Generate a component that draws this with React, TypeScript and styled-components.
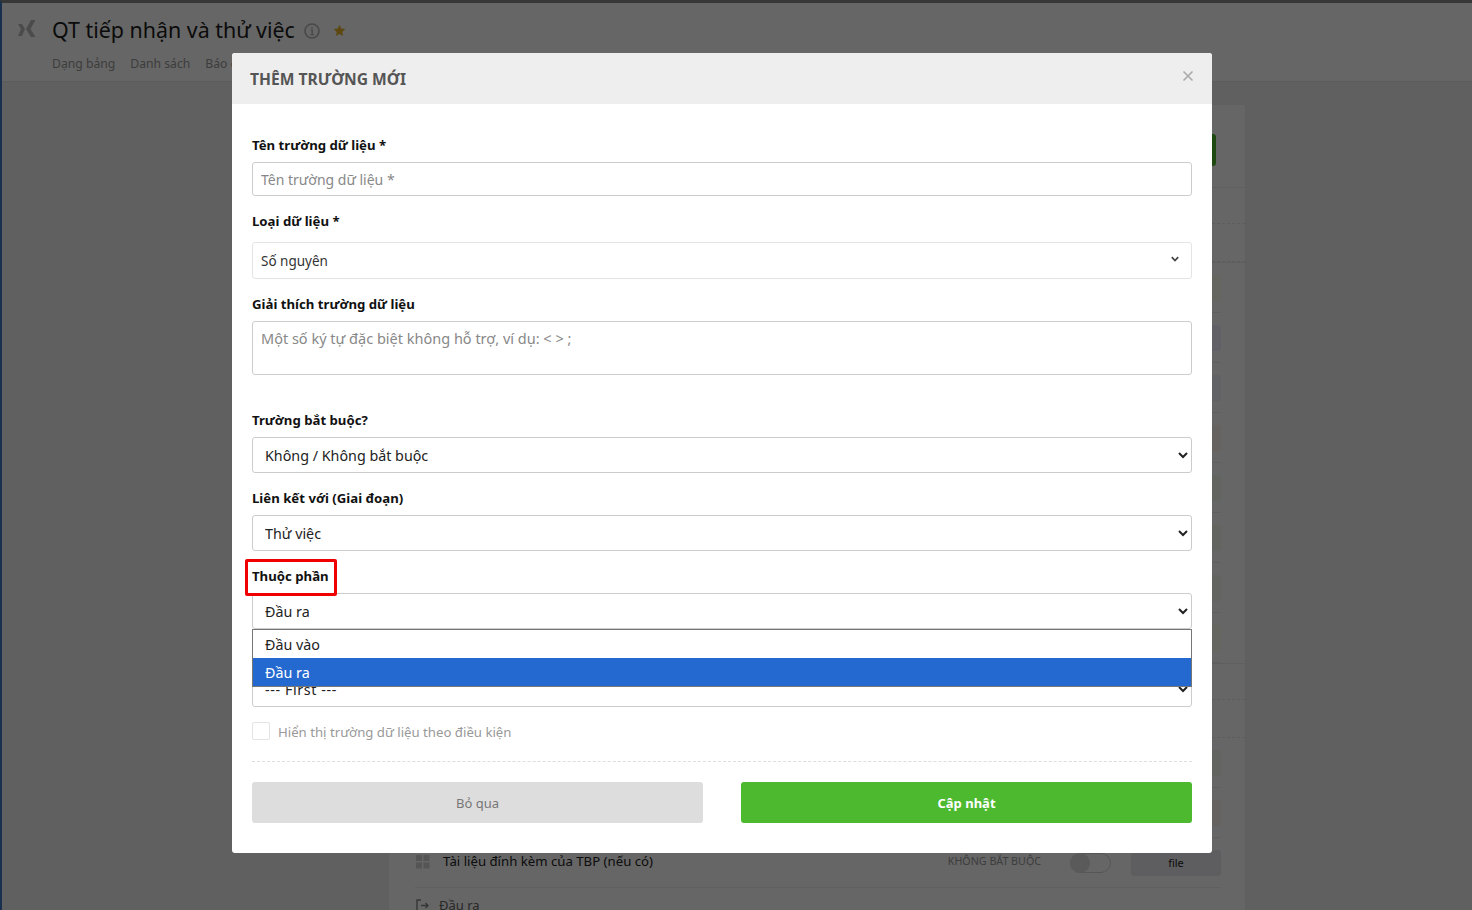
import React from 'react';
import styled, { createGlobalStyle } from 'styled-components';

const Global = createGlobalStyle`
  html, body { margin: 0; padding: 0; height: 910px; overflow: hidden; }
  body { font-family: "Noto Sans", "Open Sans", "Liberation Sans", sans-serif; background: #f0f0f0; }
  *, *::before, *::after { box-sizing: border-box; }
`;

const Page = styled.div`
  position: relative;
  width: 1472px;
  height: 910px;
  overflow: hidden;
  background: #f0f0f0;
`;
const Shell = styled.div`
  height: 910px;
  border-top: 3px solid #8a8a8a;
  border-left: 2px solid #3f77c4;
`;
const Header = styled.header`
  height: 79px;
  background: #fff;
  border-bottom: 1px solid #e6e6e6;
  padding: 11px 0 0 16px;
  display: flex;
  gap: 16px;
`;
const Logo = styled.svg`
  width: 18px;
  height: 18px;
  margin-top: 6px;
  color: #bbb;
`;
const HeaderText = styled.div`
  display: flex;
  flex-direction: column;
`;
const TitleRow = styled.div`
  display: flex;
  align-items: center;
  height: 30px;
`;
const Title = styled.h1`
  margin: 0;
  font-size: 21.4px;
  font-weight: 400;
  color: #1c1c1c;
  white-space: nowrap;
`;
const InfoIcon = styled.svg`
  width: 16px;
  height: 16px;
  margin-left: 9px;
  margin-top: 3px;
  color: #b4b4b4;
`;
const StarIcon = styled.svg`
  width: 13px;
  height: 13px;
  margin-left: 13px;
  margin-top: 3px;
  color: #e8b42c;
`;
const Tabs = styled.nav`
  display: flex;
  gap: 15px;
  margin-top: 11px;
`;
const Tab = styled.span`
  font-size: 12.2px;
  line-height: 18px;
  color: #999;
`;
const Card = styled.section`
  width: 858px;
  margin: 22px 0 0 386px;
  background: #fff;
  border: 1px solid #eee;
  border-radius: 3px;
  padding-right: 24px;
`;
const CardTop = styled.div`
  height: 83px;
  padding-top: 29px;
  margin-right: -24px;
  border-bottom: 1px solid #eee;
  display: flex;
  justify-content: flex-end;
  padding-right: 29px;
`;
const GreenAction = styled.div`
  width: 80px;
  height: 32px;
  border-radius: 3px;
  background: #4cb92f;
`;
const DashedBand = styled.div<{ $h: number }>`
  height: ${p => p.$h}px;
  margin-right: -24px;
  border-bottom: 1px dashed #e8e8e8;
`;
const Row = styled.div`
  height: 50px;
  display: flex;
  align-items: center;
  justify-content: flex-end;
  margin-left: 26px;
  border-bottom: 1px solid #eee;
`;
const RowLabel = styled.span`
  position: absolute;
  left: 443px;
  font-size: 13.2px;
  color: #222;
  margin-top: -3px;
`;
const HandleIcon = styled.svg`
  position: absolute;
  left: 415px;
  width: 15px;
  height: 15px;
  color: #d4d4d4;
  margin-top: -2px;
`;
const RowTag = styled.span`
  font-size: 10.7px;
  color: #999;
  margin-right: 29px;
  white-space: nowrap;
  margin-top: -3px;
`;
const Toggle = styled.span`
  position: relative;
  width: 41px;
  height: 20px;
  border-radius: 10px;
  border: 1px solid #d8d8d8;
  margin-right: 20px;
  &::before {
    content: "";
    position: absolute;
    left: -1px;
    top: -1px;
    width: 20px;
    height: 20px;
    border-radius: 50%;
    background: #e0e0e0;
  }
`;
const RowButton = styled.div<{ $tint: string }>`
  width: 90px;
  height: 26px;
  border-radius: 3px;
  background: ${p => p.$tint};
  font-size: 11px;
  line-height: 26px;
  text-align: center;
  color: #222;
`;
const Divider = styled.div<{ $h: number }>`
  height: ${p => p.$h}px;
  margin-right: -24px;
  border-top: 1px solid #eee;
`;
const Band = styled.div<{ $h: number }>`
  height: ${p => p.$h}px;
  margin-right: -24px;
  border-bottom: 1px dashed #e8e8e8;
`;
const OutRow = styled.div`
  display: flex;
  align-items: center;
  gap: 9px;
  margin: 8px 0 0 26px;
  font-size: 13px;
  color: #666;
`;
const OutIcon = styled.svg`
  width: 15px;
  height: 15px;
  color: #888;
`;

const Overlay = styled.div`
  position: absolute;
  inset: 0;
  background: rgba(0, 0, 0, 0.6);
  padding: 53px 0 0 232px;
`;
const Modal = styled.div`
  width: 980px;
  height: 800px;
  background: #fff;
  border-radius: 3px;
  overflow: hidden;
`;
const ModalHeader = styled.div`
  position: relative;
  height: 51px;
  background: #eee;
  padding: 0 18px;
  display: flex;
  align-items: center;
`;
const ModalTitle = styled.h2`
  margin: 0;
  font-size: 15.6px;
  font-weight: 700;
  color: #555;
`;
const Close = styled.svg`
  position: absolute;
  right: 18px;
  top: 17px;
  width: 12px;
  height: 12px;
  color: #aaa;
`;
const ModalBody = styled.form`
  padding: 32px 20px 0;
`;
const Label = styled.label<{ $top?: number; $gap?: number }>`
  display: block;
  font-size: 13.2px;
  font-weight: 700;
  line-height: 18px;
  color: #111;
  margin-top: ${p => p.$top ?? 16}px;
  margin-bottom: ${p => p.$gap ?? 8}px;
`;
const FlaggedLabel = styled(Label)`
  position: relative;
  z-index: 1;
  &::before {
    content: "";
    position: absolute;
    left: -7px;
    top: -8px;
    width: 92px;
    height: 37px;
    border: 3px solid #f00000;
    border-radius: 2px;
    pointer-events: none;
  }
`;
const TextInput = styled.input`
  display: block;
  width: 100%;
  height: 34px;
  border: 1px solid #ccc;
  border-radius: 3px;
  padding: 0 8px;
  font: 14px "Noto Sans", "Open Sans", sans-serif;
  color: #333;
  &::placeholder { color: #888; opacity: 1; }
`;
const TextArea = styled.textarea`
  display: block;
  width: 100%;
  height: 54px;
  border: 1px solid #ccc;
  border-radius: 3px;
  padding: 6px 8px;
  resize: none;
  font: 14.5px/20px "Noto Sans", "Open Sans", sans-serif;
  &::placeholder { color: #888; opacity: 1; }
`;
const CustomSelect = styled.div`
  position: relative;
  height: 37px;
  border: 1px solid #e4e4e4;
  border-radius: 3px;
  padding: 0 8px;
  display: flex;
  align-items: center;
  font-size: 13.5px;
  color: #333;
`;
const Chevron = styled.svg`
  position: absolute;
  right: 12px;
  top: 13px;
  width: 8px;
  height: 6px;
  color: #444;
`;
const NativeSelect = styled.select<{ $top?: number; $spread?: number }>`
  display: block;
  width: 100%;
  height: 36px;
  margin-top: ${p => p.$top ?? 0}px;
  border: 1px solid #ccc;
  border-radius: 3px;
  padding: 0 8px;
  background-color: #fff;
  color: #222;
  letter-spacing: ${p => p.$spread ?? 0}px;
  font: 14.3px "Noto Sans", "Open Sans", sans-serif;
`;
const SelectWrap = styled.div`
  position: relative;
`;
const OptionList = styled.ul`
  position: absolute;
  left: 0;
  right: 0;
  top: 36px;
  margin: 0;
  padding: 0;
  list-style: none;
  background: #fff;
  border: 1px solid #767676;
  z-index: 2;
`;
const Option = styled.li<{ $selected?: boolean }>`
  height: 28px;
  padding-left: 12px;
  display: flex;
  align-items: center;
  font-size: 14.3px;
  color: ${p => (p.$selected ? '#fff' : '#222')};
  background: ${p => (p.$selected ? '#2469cf' : '#fff')};
`;
const CheckRow = styled.label`
  display: flex;
  align-items: center;
  gap: 8px;
  margin-top: 15px;
  height: 17px;
`;
const CheckText = styled.span`
  padding-top: 3px;
  font-size: 13.2px;
  line-height: 19px;
  color: #999;
`;
const CheckBox = styled.span`
  width: 18px;
  height: 18px;
  border: 1px solid #e4e4e4;
  border-radius: 2px;
`;
const Dash = styled.div`
  margin-top: 22px;
  border-top: 1px dashed #ddd;
`;
const Actions = styled.div`
  display: flex;
  justify-content: space-between;
  margin-top: 20px;
`;
const ActionButton = styled.button<{ $primary?: boolean }>`
  width: 451px;
  height: 41px;
  border: 0;
  border-radius: 3px;
  background: ${p => (p.$primary ? '#4cb92f' : '#ddd')};
  color: ${p => (p.$primary ? '#fff' : '#777')};
  font: ${p => (p.$primary ? 700 : 400)} 13px "Noto Sans", "Open Sans", sans-serif;
`;

const tints = ['#fffff0', '#f0f0ff', '#f0f4ff', '#fcf6ee', '#f2fbee', '#f2fbee', '#f2fbee', '#fffff0'];

export default function App() {
  return (
    <>
      <Global />
      <Page>
        <Shell>
          <Header>
            <Logo viewBox="0 0 18 18" fill="currentColor">
              <path d="M0 4h4l3 5-3 7H0l3-7z" />
              <path d="M13 0h4.5L12.5 9l5 8H13L8 9z" />
            </Logo>
            <HeaderText>
              <TitleRow>
                <Title>QT tiếp nhận và thử việc</Title>
                <InfoIcon viewBox="0 0 16 16" fill="none" stroke="currentColor" strokeWidth="1.6">
                  <circle cx="8" cy="8" r="7" />
                  <path d="M6.6 7.2H8.2V11.6M6.6 11.6h3.2" strokeWidth="1.3" />
                  <circle cx="8" cy="4.8" r="0.9" fill="currentColor" stroke="none" />
                </InfoIcon>
                <StarIcon viewBox="0 0 24 24" fill="currentColor">
                  <path d="M12 1.5l3.2 7 7.6.9-5.6 5.2 1.5 7.6L12 18.4l-6.7 3.8 1.5-7.6L1.2 9.4l7.6-.9z" />
                </StarIcon>
              </TitleRow>
              <Tabs>
                <Tab>Dạng bảng</Tab>
                <Tab>Danh sách</Tab>
                <Tab>Báo cáo</Tab>
              </Tabs>
            </HeaderText>
          </Header>
          <Card>
            <CardTop><GreenAction /></CardTop>
            <DashedBand $h={36} />
            <DashedBand $h={38} />
            <Divider $h={0} />
            {tints.map((t, i) => (
              <Row key={i}>
                <RowButton $tint={t} />
              </Row>
            ))}
            <Divider $h={36} />
            <Band $h={0} />
            <Band $h={38} />
            <Row><RowButton $tint="#f2fbee" /></Row>
            <Row><RowButton $tint="#fcf6ee" /></Row>
            <Row>
              <HandleIcon viewBox="0 0 15 15" fill="currentColor">
                <rect x="1" y="1" width="6" height="6" />
                <rect x="8.5" y="1" width="6" height="6" />
                <rect x="1" y="8.5" width="6" height="6" />
                <rect x="8.5" y="8.5" width="6" height="6" />
              </HandleIcon>
              <RowLabel>Tài liệu đính kèm của TBP (nếu có)</RowLabel>
              <RowTag>KHÔNG BẮT BUỘC</RowTag>
              <Toggle />
              <RowButton $tint="#ececf0">file</RowButton>
            </Row>
            <OutRow>
              <OutIcon viewBox="0 0 15 15" fill="none" stroke="currentColor" strokeWidth="1.4">
                <path d="M6 2H2v11h4M6 7.5h7M10.5 5l2.5 2.5-2.5 2.5" />
              </OutIcon>
              Đầu ra
            </OutRow>
          </Card>
        </Shell>
        <Overlay>
          <Modal>
            <ModalHeader>
              <ModalTitle>THÊM TRƯỜNG MỚI</ModalTitle>
              <Close viewBox="0 0 12 12" fill="none" stroke="currentColor" strokeWidth="1.6">
                <path d="M1.5 1.5l9 9M10.5 1.5l-9 9" />
              </Close>
            </ModalHeader>
            <ModalBody>
              <Label $top={0}>Tên trường dữ liệu *</Label>
              <TextInput placeholder="Tên trường dữ liệu *" readOnly />
              <Label $gap={12}>Loại dữ liệu *</Label>
              <CustomSelect>
                Số nguyên
                <Chevron viewBox="0 0 8 6" fill="none" stroke="currentColor" strokeWidth="1.7">
                  <path d="M.8 1.2L4 4.6l3.2-3.4" />
                </Chevron>
              </CustomSelect>
              <Label>Giải thích trường dữ liệu</Label>
              <TextArea placeholder="Một số ký tự đặc biệt không hỗ trợ, ví dụ: < > ;" readOnly />
              <Label $top={36}>Trường bắt buộc?</Label>
              <NativeSelect defaultValue="a"><option value="a">Không / Không bắt buộc</option></NativeSelect>
              <Label>Liên kết với (Giai đoạn)</Label>
              <NativeSelect defaultValue="a"><option value="a">Thử việc</option></NativeSelect>
              <FlaggedLabel>Thuộc phần</FlaggedLabel>
              <SelectWrap>
                <NativeSelect defaultValue="a"><option value="a">Đầu ra</option></NativeSelect>
                <OptionList>
                  <Option>Đầu vào</Option>
                  <Option $selected>Đầu ra</Option>
                </OptionList>
              </SelectWrap>
              <NativeSelect $top={42} $spread={0.6} defaultValue="a"><option value="a">--- First ---</option></NativeSelect>
              <CheckRow><CheckBox /><CheckText>Hiển thị trường dữ liệu theo điều kiện</CheckText></CheckRow>
              <Dash />
              <Actions>
                <ActionButton type="button">Bỏ qua</ActionButton>
                <ActionButton type="button" $primary>Cập nhật</ActionButton>
              </Actions>
            </ModalBody>
          </Modal>
        </Overlay>
      </Page>
    </>
  );
}
